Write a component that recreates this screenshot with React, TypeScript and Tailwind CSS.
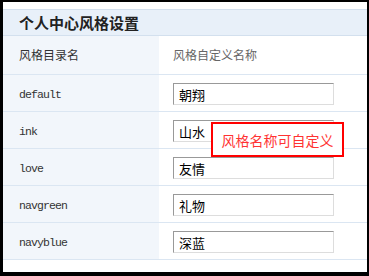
import React from "react";

const rows = [
  { dir: "default", name: "朝翔" },
  { dir: "ink", name: "山水" },
  { dir: "love", name: "友情" },
  { dir: "navgreen", name: "礼物" },
  { dir: "navyblue", name: "深蓝" },
];

const cjk = { fontFamily: '"Noto Sans CJK SC", "Noto Sans", sans-serif' };
const mono = { fontFamily: '"Liberation Mono", "DejaVu Sans Mono", monospace' };

export default function App() {
  return (
    <div className="w-[369px] h-[276px] bg-black pt-[2px] pl-[3px] pr-[2px] pb-[4px]">
      <div className="relative w-[364px] h-[270px] bg-white pt-[7px]" style={cjk}>
        <div className="h-[27px] bg-[#e8f0f9] border-y border-[#d3e0ee] flex items-center pl-[16px]">
          <span className="text-[15px] font-bold text-[#222] leading-none">个人中心风格设置</span>
        </div>
        <div className="flex h-[39px] border-b border-[#dbe6f2]">
          <div className="w-[156px] bg-[#f2f6fb] flex items-center pl-[16px] text-[12px] text-[#333]">
            风格目录名
          </div>
          <div className="flex-1 flex items-center pl-[14px] text-[12px] text-[#666]">风格自定义名称</div>
        </div>
        {rows.map((r) => (
          <div key={r.dir} className="flex h-[37px] border-b border-[#dbe6f2]">
            <div
              className="w-[156px] bg-[#f2f6fb] flex items-center pl-[16px] pt-[3px] text-[11.5px] tracking-[-0.9px] text-[#333]"
              style={mono}
            >
              {r.dir}
            </div>
            <div className="flex-1 flex items-center pl-[14px] pt-[2px]">
              <div className="w-[161px] h-[22px] border border-t-[#999] border-l-[#999] border-r-[#ddd] border-b-[#ddd] flex items-center pl-[5px] text-[13px] text-black leading-none">
                {r.name}
              </div>
            </div>
          </div>
        ))}
        <div className="absolute left-[208px] top-[120px] w-[133px] h-[35px] border-2 border-[#ff0000] bg-white flex items-center justify-center text-[14px] text-[#f33] leading-none">
          风格名称可自定义
        </div>
      </div>
    </div>
  );
}
